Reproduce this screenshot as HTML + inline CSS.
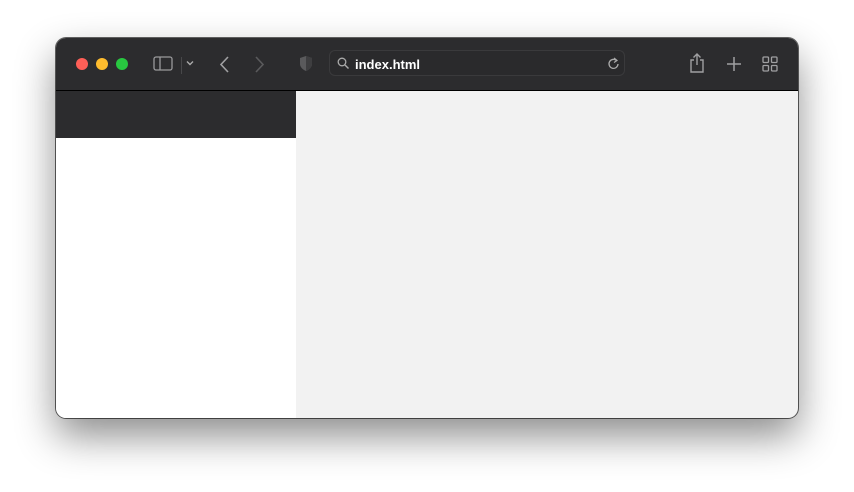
<!DOCTYPE html>
<html><head><style>
body{margin:0;width:854px;height:492px;background:#fff;position:relative;overflow:hidden;font-family:"Liberation Sans",sans-serif}
.win{position:absolute;left:56px;top:38px;width:742px;height:380px;border-radius:10px;overflow:hidden;background:#f2f2f2;box-shadow:0 18px 40px rgba(0,0,0,.45),0 0 0 1px rgba(0,0,0,.6)}
.tb{position:absolute;left:0;top:0;width:742px;height:52px;background:#2c2c2e;border-bottom:1px solid #000}
.dot{position:absolute;top:20px;width:12px;height:12px;border-radius:50%}
.side1{position:absolute;left:0;top:53px;width:240px;height:47px;background:#2c2c2e}
.side2{position:absolute;left:0;top:100px;width:240px;height:280px;background:#fff}
.addr{position:absolute;left:273px;top:12px;width:296px;height:26px;border-radius:6px;background:#2a2a2c;border:1px solid #3a3a3c;box-sizing:border-box}
.addr span{position:absolute;left:25px;top:6px;color:#fff;font-size:13px;font-weight:bold}
svg{position:absolute}
</style></head><body>
<div class="win">
<div class="tb">
<div class="dot" style="left:20px;background:#fe5f57"></div>
<div class="dot" style="left:40px;background:#febc2e"></div>
<div class="dot" style="left:60px;background:#28c840"></div>
<svg style="left:97px;top:18px" width="20" height="16"><rect x="1" y="1" width="18" height="13" rx="2" fill="none" stroke="#9a9a9c" stroke-width="1.3"/><line x1="7" y1="1" x2="7" y2="14" stroke="#9a9a9c" stroke-width="1.3"/></svg>
<div style="position:absolute;left:125px;top:19px;width:1px;height:17px;background:#48484a"></div>
<svg style="left:130px;top:22px" width="8" height="6"><path d="M1 1.5L4 4.5L7 1.5" fill="none" stroke="#aaa" stroke-width="1.4"/></svg>
<svg style="left:163px;top:18px" width="12" height="18"><path d="M9 1L2 8.5L9 16" fill="none" stroke="#a0a0a2" stroke-width="1.6"/></svg>
<svg style="left:198px;top:18px" width="12" height="18"><path d="M2 1L9 8.5L2 16" fill="none" stroke="#5a5a5c" stroke-width="1.6"/></svg>
<svg style="left:243px;top:17px" width="14" height="17"><path d="M7 1L13 3V9C13 12 10 15 7 16C4 15 1 12 1 9V3Z" fill="#5a5a5c"/><path d="M7 1L13 3V9C13 12 10 15 7 16Z" fill="#3e3e40"/></svg>
<div class="addr"><svg style="left:7px;top:6px" width="13" height="13"><circle cx="5" cy="5" r="3.8" fill="none" stroke="#aaa" stroke-width="1.3"/><path d="M8 8L11.5 11.5" stroke="#aaa" stroke-width="1.4"/></svg><span>index.html</span>
<svg style="left:277px;top:6px" width="13" height="14"><path d="M9.5 3.5A4.5 4.5 0 1 0 11 7" fill="none" stroke="#aaa" stroke-width="1.3"/><path d="M7 1L10 3.5L7 5.5" fill="none" stroke="#aaa" stroke-width="1.2"/></svg></div>
<svg style="left:632px;top:14px" width="18" height="22"><path d="M6 8H3V20H15V8H12" fill="none" stroke="#a0a0a2" stroke-width="1.4"/><path d="M9 2V13M5.5 5.5L9 2L12.5 5.5" fill="none" stroke="#a0a0a2" stroke-width="1.4"/></svg>
<svg style="left:670px;top:18px" width="16" height="16"><path d="M8 1V15M1 8H15" stroke="#a0a0a2" stroke-width="1.5"/></svg>
<svg style="left:706px;top:18px" width="16" height="16"><g fill="none" stroke="#a0a0a2" stroke-width="1.3"><rect x="1" y="1" width="5.5" height="5.5" rx="1"/><rect x="9.5" y="1" width="5.5" height="5.5" rx="1"/><rect x="1" y="9.5" width="5.5" height="5.5" rx="1"/><rect x="9.5" y="9.5" width="5.5" height="5.5" rx="1"/></g></svg>
</div>
<div class="side1"></div><div class="side2"></div>
</div>
</body></html>
